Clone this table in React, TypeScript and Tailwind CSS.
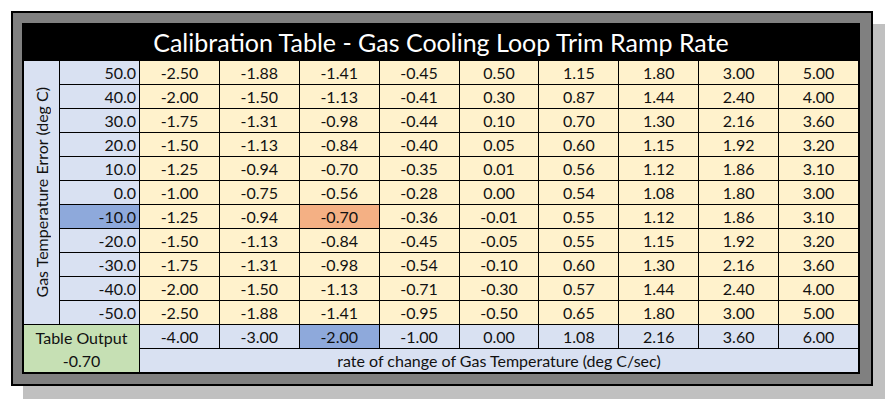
import React from 'react';

const rows: { t: string; v: string[] }[] = [
  { t: '50.0', v: ['-2.50', '-1.88', '-1.41', '-0.45', '0.50', '1.15', '1.80', '3.00', '5.00'] },
  { t: '40.0', v: ['-2.00', '-1.50', '-1.13', '-0.41', '0.30', '0.87', '1.44', '2.40', '4.00'] },
  { t: '30.0', v: ['-1.75', '-1.31', '-0.98', '-0.44', '0.10', '0.70', '1.30', '2.16', '3.60'] },
  { t: '20.0', v: ['-1.50', '-1.13', '-0.84', '-0.40', '0.05', '0.60', '1.15', '1.92', '3.20'] },
  { t: '10.0', v: ['-1.25', '-0.94', '-0.70', '-0.35', '0.01', '0.56', '1.12', '1.86', '3.10'] },
  { t: '0.0', v: ['-1.00', '-0.75', '-0.56', '-0.28', '0.00', '0.54', '1.08', '1.80', '3.00'] },
  { t: '-10.0', v: ['-1.25', '-0.94', '-0.70', '-0.36', '-0.01', '0.55', '1.12', '1.86', '3.10'] },
  { t: '-20.0', v: ['-1.50', '-1.13', '-0.84', '-0.45', '-0.05', '0.55', '1.15', '1.92', '3.20'] },
  { t: '-30.0', v: ['-1.75', '-1.31', '-0.98', '-0.54', '-0.10', '0.60', '1.30', '2.16', '3.60'] },
  { t: '-40.0', v: ['-2.00', '-1.50', '-1.13', '-0.71', '-0.30', '0.57', '1.44', '2.40', '4.00'] },
  { t: '-50.0', v: ['-2.50', '-1.88', '-1.41', '-0.95', '-0.50', '0.65', '1.80', '3.00', '5.00'] },
];

const output = ['-4.00', '-3.00', '-2.00', '-1.00', '0.00', '1.08', '2.16', '3.60', '6.00'];

// selected point in the table
const selRow = 6;
const selCol = 2;

export default function App() {
  return (
    <div className="w-[895px] h-[403px] bg-white pl-[11px] pt-[11px] text-[#111] font-['Lato','Open_Sans',sans-serif]">
      <div className="w-[862px] h-[375px] border-2 border-black bg-[#808080] shadow-[12px_13px_0_#c0c0c0] pl-[9px] pt-[10px]">
        <div className="w-[838px] h-[351px] border-2 border-black bg-black grid grid-cols-[35px_79px_repeat(9,minmax(0,1fr))] grid-rows-[35px_repeat(13,23px)] gap-px text-[16px] leading-none">
          {/* Title */}
          <div className="col-span-11 flex items-center justify-center text-white text-[25px]">
            Calibration Table - Gas Cooling Loop Trim Ramp Rate
          </div>

          {/* Rotated axis label */}
          <div className="col-start-1 row-start-2 row-span-11 bg-[#d9e1f2] flex items-center justify-center">
            <span className="[writing-mode:vertical-rl] rotate-180 whitespace-nowrap">
              Gas Temperature Error (deg C)
            </span>
          </div>

          {rows.map((r, i) => (
            <React.Fragment key={r.t}>
              <div
                className={`col-start-2 flex items-center justify-end pr-[3px] pt-px ${
                  i === selRow ? 'bg-[#8ea9db]' : 'bg-[#d9e1f2]'
                }`}
              >
                {r.t}
              </div>
              {r.v.map((v, j) => (
                <div
                  key={j}
                  className={`flex items-center justify-center pt-px ${
                    i === selRow && j === selCol ? 'bg-[#f4b084]' : 'bg-[#fff2cc]'
                  }`}
                >
                  {v}
                </div>
              ))}
            </React.Fragment>
          ))}

          {/* Output block */}
          <div className="col-start-1 col-span-2 row-span-2 bg-[#c6e0b4] flex flex-col">
            <div className="h-[24px] flex items-center justify-center pt-px">Table Output</div>
            <div className="h-[23px] flex items-center justify-center pt-px">-0.70</div>
          </div>
          {output.map((v, j) => (
            <div
              key={j}
              className={`flex items-center justify-center pt-px ${
                j === selCol ? 'bg-[#8ea9db]' : 'bg-[#d9e1f2]'
              }`}
            >
              {v}
            </div>
          ))}
          <div className="col-start-3 col-span-9 bg-[#d9e1f2] flex items-center justify-center pt-px">
            rate of change of Gas Temperature (deg C/sec)
          </div>
        </div>
      </div>
    </div>
  );
}
